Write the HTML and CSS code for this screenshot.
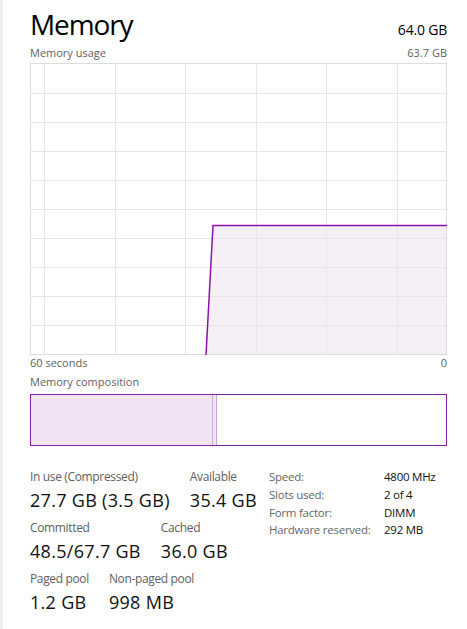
FILE: index.html
```html
<!DOCTYPE html>
<html lang="en">
<head>
<meta charset="utf-8">
<title>Memory</title>
<link rel="stylesheet" href="styles.css">
</head>
<body>
<div class="page">
  <header class="head">
    <h1 class="title">Memory</h1>
    <span class="total">64.0 GB</span>
  </header>
  <div class="caption-row top">
    <span>Memory usage</span>
    <span>63.7 GB</span>
  </div>
  <svg class="graph" width="417" height="292" viewBox="0 0 417 292" aria-label="Memory usage graph">
    <rect x="0" y="0" width="417" height="292" fill="#ffffff"/>
    <polygon points="176,291 183,162 416.5,162 416.5,291" fill="#f4f0f6"/>
    <g stroke="#e6e6e6" stroke-width="1">
      <line x1="14.5" y1="0" x2="14.5" y2="292"/>
      <line x1="85.5" y1="0" x2="85.5" y2="292"/>
      <line x1="155.5" y1="0" x2="155.5" y2="292"/>
      <line x1="226.5" y1="0" x2="226.5" y2="292"/>
      <line x1="296.5" y1="0" x2="296.5" y2="292"/>
      <line x1="367.5" y1="0" x2="367.5" y2="292"/>
      <line x1="0" y1="30.5" x2="417" y2="30.5"/>
      <line x1="0" y1="59.5" x2="417" y2="59.5"/>
      <line x1="0" y1="88.5" x2="417" y2="88.5"/>
      <line x1="0" y1="117.5" x2="417" y2="117.5"/>
      <line x1="0" y1="146.5" x2="417" y2="146.5"/>
      <line x1="0" y1="175.5" x2="417" y2="175.5"/>
      <line x1="0" y1="204.5" x2="417" y2="204.5"/>
      <line x1="0" y1="233.5" x2="417" y2="233.5"/>
      <line x1="0" y1="262.5" x2="417" y2="262.5"/>
    </g>
    <rect x="0.5" y="0.5" width="416" height="291" fill="none" stroke="#dcdcdc"/>
    <polyline points="176,292 183,162.5 417,162.5" fill="none" stroke="#8b12ae" stroke-width="1.5"/>
  </svg>
  <div class="caption-row">
    <span>60 seconds</span>
    <span>0</span>
  </div>
  <div class="caption-row comp-label">
    <span>Memory composition</span>
  </div>
  <div class="composition">
    <div class="seg-used"></div>
    <div class="seg-modified"></div>
  </div>

  <section class="stats">
    <div class="stats-left">
      <div class="stat-row">
        <div class="stat">
          <div class="label">In use (Compressed)</div>
          <div class="value">27.7 GB (3.5 GB)</div>
        </div>
        <div class="stat">
          <div class="label">Available</div>
          <div class="value">35.4 GB</div>
        </div>
      </div>
      <div class="stat-row">
        <div class="stat">
          <div class="label">Committed</div>
          <div class="value">48.5/67.7 GB</div>
        </div>
        <div class="stat">
          <div class="label">Cached</div>
          <div class="value">36.0 GB</div>
        </div>
      </div>
      <div class="stat-row">
        <div class="stat">
          <div class="label">Paged pool</div>
          <div class="value">1.2 GB</div>
        </div>
        <div class="stat">
          <div class="label">Non-paged pool</div>
          <div class="value">998 MB</div>
        </div>
      </div>
    </div>
    <dl class="specs">
      <dt>Speed:</dt><dd>4800 MHz</dd>
      <dt>Slots used:</dt><dd>2 of 4</dd>
      <dt>Form factor:</dt><dd>DIMM</dd>
      <dt>Hardware reserved:</dt><dd>292 MB</dd>
    </dl>
  </section>
</div>
</body>
</html>
```
FILE: styles.css
```css
html, body {
  margin: 0;
  padding: 0;
  background: #ffffff;
}

body {
  font-family: "Open Sans", "Noto Sans", "Liberation Sans", sans-serif;
  color: #1a1a1a;
}

.page {
  border-left: 3px solid #efefef;
  padding: 6px 20px 0 27px;
  width: 417px;
  min-height: 629px;
  box-sizing: content-box;
}

.head {
  display: flex;
  justify-content: space-between;
  align-items: baseline;
  height: 36px;
}

.title {
  margin: 0;
  font-size: 28px;
  line-height: 36px;
  font-weight: 400;
  color: #000;
  letter-spacing: -1.1px;
}

.total {
  font-size: 14px;
  color: #000;
  letter-spacing: -0.2px;
}

.caption-row {
  display: flex;
  justify-content: space-between;
  font-size: 11px;
  line-height: 16px;
  color: #5f5f5f;
}

.caption-row.top {
  margin-top: 3px;
  margin-bottom: 2px;
}

.graph {
  display: block;
}

.comp-label {
  margin-top: 3px;
  margin-bottom: 4px;
}

.composition {
  display: flex;
  height: 50px;
  border: 1px solid #86239f;
  background: #ffffff;
}

.seg-used {
  width: 181px;
  background: #f0e4f3;
  border-right: 1px solid #caa7d6;
}

.seg-modified {
  width: 3px;
  background: #f0e4f3;
  border-right: 1px solid #caa7d6;
}

.stats {
  display: flex;
  align-items: flex-start;
  margin-top: 23px;
}

.stats-left {
  display: flex;
  flex-direction: column;
  gap: 8px;
  width: 239px;
}

.stat-row {
  display: flex;
  gap: 20px;
}

.stat {
  display: flex;
  flex-direction: column;
  gap: 3px;
}

.label {
  font-size: 12px;
  line-height: 16px;
  color: #606060;
  letter-spacing: -0.35px;
  white-space: nowrap;
}

.value {
  font-size: 18px;
  line-height: 24px;
  color: #111;
  letter-spacing: 0.3px;
  white-space: nowrap;
}

.specs {
  display: grid;
  grid-template-columns: 115px auto;
  align-content: start;
  margin: -1px 0 0 0;
  font-size: 11.5px;
  line-height: 17.8px;
  letter-spacing: -0.25px;
}

.specs dt {
  color: #666;
  white-space: nowrap;
}

.specs dd {
  margin: 0;
  color: #111;
  white-space: nowrap;
}
```
